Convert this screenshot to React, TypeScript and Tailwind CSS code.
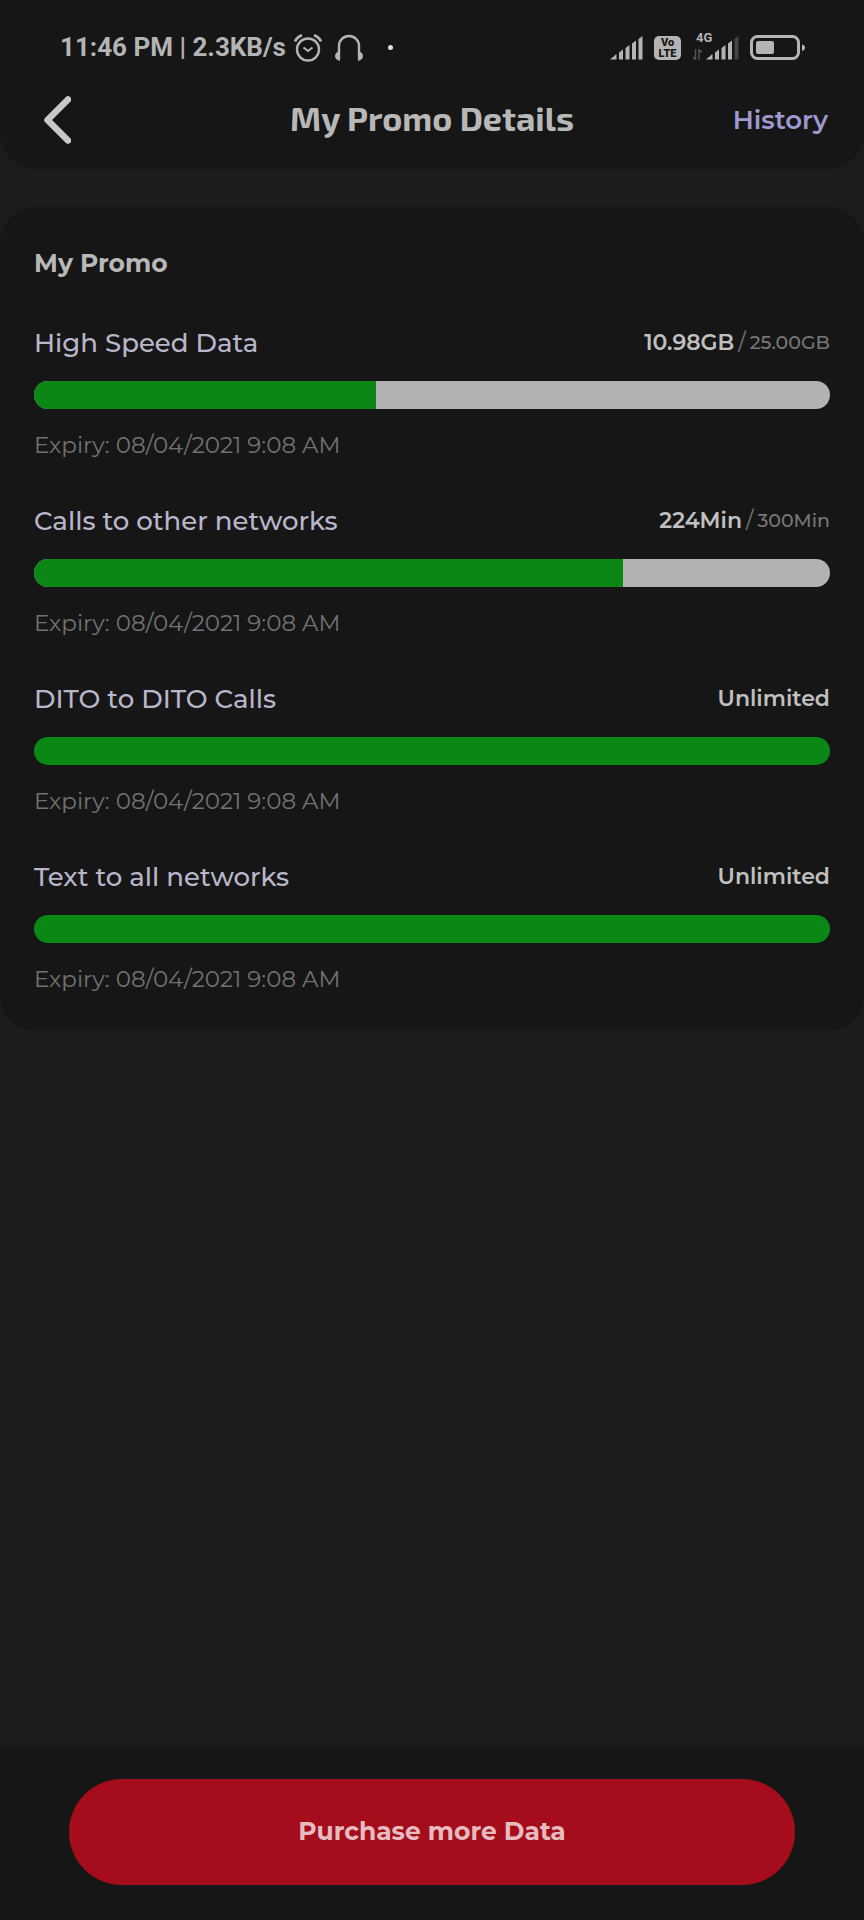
import clsx from 'clsx';

interface Allowance {
  id: string;
  label: string;
  remaining: string;
  total?: string;
  percent: number;
  expiry: string;
}

const allowances: Allowance[] = [
  { id: 'data', label: 'High Speed Data', remaining: '10.98GB', total: '25.00GB', percent: 43, expiry: '08/04/2021 9:08 AM' },
  { id: 'calls', label: 'Calls to other networks', remaining: '224Min', total: '300Min', percent: 74, expiry: '08/04/2021 9:08 AM' },
  { id: 'dito', label: 'DITO to DITO Calls', remaining: 'Unlimited', percent: 100, expiry: '08/04/2021 9:08 AM' },
  { id: 'text', label: 'Text to all networks', remaining: 'Unlimited', percent: 100, expiry: '08/04/2021 9:08 AM' },
];

function AlarmIcon() {
  return (
    <svg width="28" height="28" viewBox="0 0 28 28" fill="none" stroke="currentColor" strokeWidth="2.4" aria-hidden="true">
      <circle cx="14" cy="15.5" r="11" />
      <path d="M9.5 13.5l4.5 3.5 4.5-3.5" strokeWidth="2" />
      <path d="M1 7.5Q3 3 8 1.3M27 7.5Q25 3 20 1.3" strokeWidth="2.6" />
    </svg>
  );
}

function HeadphonesIcon() {
  return (
    <svg width="30" height="28" viewBox="0 0 30 28" fill="none" aria-hidden="true">
      <path d="M5 25V12a10 10 0 0 1 20 0v13" stroke="currentColor" strokeWidth="2.4" />
      <path d="M6 17v10C3 26.5 1 24.5 1 22s2-4.5 5-5zM24 17v10c3-.5 5-2.5 5-5s-2-4.500-5-5z" fill="currentColor" />
    </svg>
  );
}

function SignalIcon({ weak = false }: { weak?: boolean }) {
  return (
    <svg width="33" height="24" viewBox="0 0 33 24" fill="currentColor" aria-hidden="true">
      <path d="M0 23.5L6.5 18v5.5z" />
      <path d="M9 16.5l4-3v10H9z" />
      <path d="M15.5 12l4-3v14.5h-4z" />
      <path d="M22 7.5l4-3v19h-4z" />
      <path d="M28.5 3L32.5 0v23.5h-4z" opacity={weak ? 0.3 : 1} />
    </svg>
  );
}

function BatteryIcon() {
  return (
    <svg width="56" height="26" viewBox="0 0 56 26" fill="none" aria-hidden="true">
      <rect x="1.5" y="1.5" width="47" height="22" rx="6" stroke="currentColor" strokeWidth="3" />
      <rect x="6" y="6" width="18" height="13" rx="2" fill="currentColor" />
      <path d="M52 9.5c2 .5 3 1.5 3 3.2s-1 2.8-3 3.3z" fill="currentColor" />
    </svg>
  );
}

function StatusBar() {
  return (
    <div className="flex h-[95px] items-center justify-between pr-[58px] pl-[60px] font-['Roboto',sans-serif] text-[#b4b4b4]">
      <div className="flex items-center gap-3">
        <div className="flex items-center gap-2">
          <span className="text-[26px] font-bold whitespace-nowrap">11:46 PM | 2.3KB/s</span>
          <AlarmIcon />
        </div>
        <HeadphonesIcon />
        <span className="ml-3 size-[5px] rounded-full bg-[#e0e0e0]" />
      </div>
      <div className="flex items-center gap-[11px]">
        <SignalIcon />
        <span className="flex h-6 w-[27px] flex-col items-center justify-center rounded-[5px] bg-[#b4b4b4] text-[11px] leading-[11px] font-black text-[#161616]">
          <span>Vo</span>
          <span>LTE</span>
        </span>
        <div className="relative flex items-end pl-[14px]">
          <span className="absolute -top-1 left-1 text-[13px] leading-3 font-bold">4G</span>
          <svg className="absolute bottom-0 left-0" width="11" height="11" viewBox="0 0 11 11" fill="none" stroke="currentColor" opacity="0.4" aria-hidden="true">
            <path d="M3.5 0v10.5L1 8M7 10.5V.5L10 3.5" strokeWidth="1.5" />
          </svg>
          <SignalIcon weak />
        </div>
        <BatteryIcon />
      </div>
    </div>
  );
}

function AllowanceRow({ item }: { item: Allowance }) {
  return (
    <li className="flex flex-col gap-5">
      <div className="flex items-center justify-between leading-9">
        <h3 id={item.id} className="text-[26px] font-medium text-[#b9b6cb]">{item.label}</h3>
        <p className="flex items-center gap-1 text-[22px] font-semibold text-[#c0c0c0]">
          {item.remaining}
          {item.total && (
            <>
              <span className="font-normal text-[#777777]">/</span>
              <span className="text-[19px] font-medium text-[#777777]">{item.total}</span>
            </>
          )}
        </p>
      </div>
      <div
        role="progressbar"
        aria-labelledby={item.id}
        aria-valuenow={item.percent}
        className="h-7 overflow-hidden rounded-full bg-[#b2b2b2]"
      >
        <div className="h-full bg-[#0a8714]" style={{ width: `${item.percent}%` }} />
      </div>
      <p className="text-[23px] leading-8 text-[#727272]">Expiry: {item.expiry}</p>
    </li>
  );
}

export default function App() {
  return (
    <div className={clsx('flex min-h-screen flex-col bg-[#1c1c1c]', "font-['Montserrat','Inter',sans-serif]")}>
      <header className="rounded-b-[36px] bg-[#161616] pb-6">
        <StatusBar />
        <div className="grid h-[50px] grid-cols-[1fr_auto_1fr] items-center px-9">
          <button type="button" aria-label="Back" className="justify-self-start pl-[7px] text-[#c8c8c8]">
            <svg width="28" height="48" viewBox="0 0 28 48" fill="none" stroke="currentColor" strokeWidth="6.5" strokeLinecap="round" strokeLinejoin="round" aria-hidden="true">
              <path d="M25 3.5L4.5 24 25 44.5" />
            </svg>
          </button>
          <h1 className="pb-1 font-['Exo_2','Noto_Sans',sans-serif] text-[34px] leading-10 font-bold text-[#b8b8b8]">My Promo Details</h1>
          <a href="#history" className="justify-self-end text-[26px] font-semibold text-[#9f99cf]">History</a>
        </div>
      </header>

      <main className="flex-1 pt-[38px]">
        <section className="rounded-[36px] bg-[#161616] px-[34px] pt-10 pb-9">
          <h2 className="text-[25px] leading-8 font-bold text-[#b8b8b8]">My Promo</h2>
          <ul className="mt-[46px] flex flex-col gap-[42px]">
            {allowances.map((item) => (
              <AllowanceRow key={item.id} item={item} />
            ))}
          </ul>
        </section>
      </main>

      <footer className="bg-[#161616] px-[69px] pt-[34px] pb-[35px]">
        <button type="button" className="h-[106px] w-full rounded-full bg-[#a50d1c] text-[25px] font-bold text-[#e6bcc0]">
          Purchase more Data
        </button>
      </footer>
    </div>
  );
}
